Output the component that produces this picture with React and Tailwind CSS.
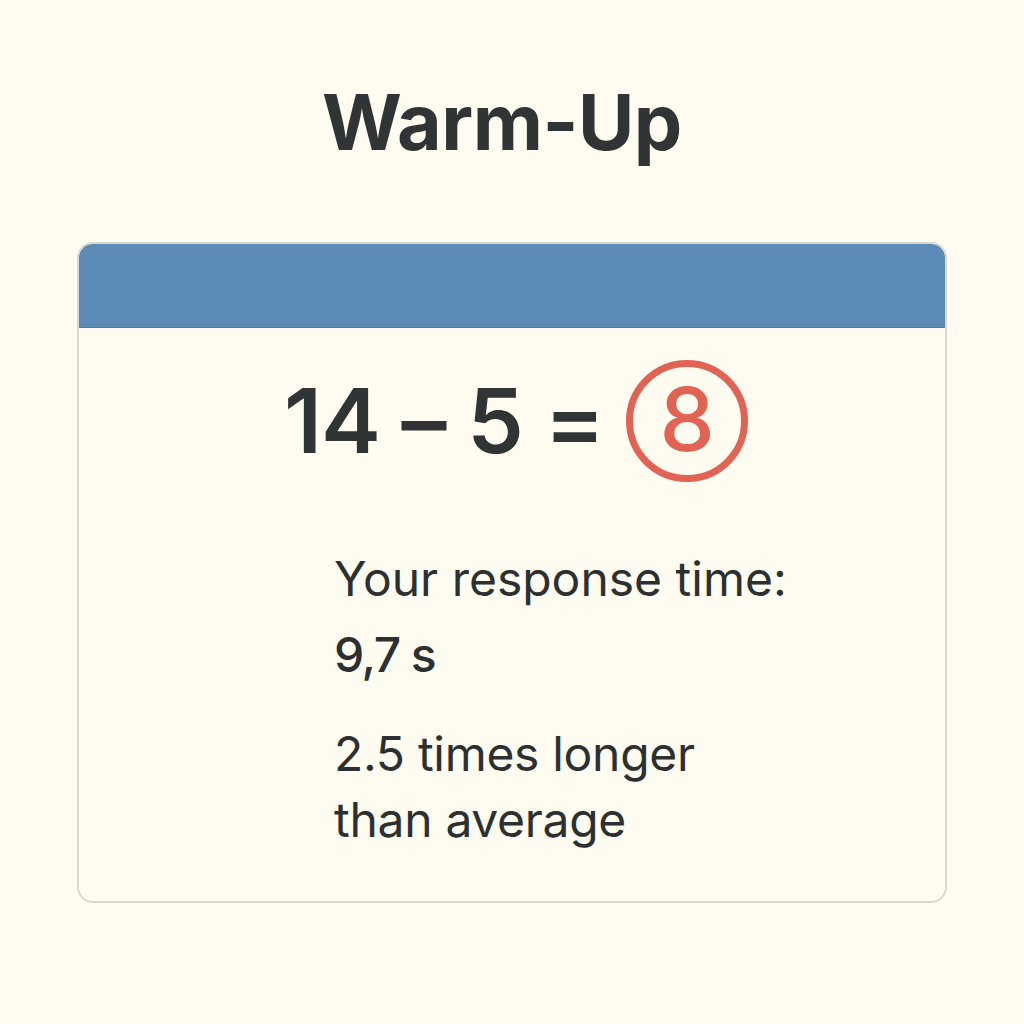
export default function App() {
  return (
    <div className="w-[1024px] h-[1024px] bg-[#fefcf0] flex flex-col items-center" style={{ fontFamily: "Inter, 'Noto Sans', sans-serif" }}>
      <h1 className="mt-[74px] mr-[20px] text-[77px] leading-[96px] font-bold text-[#303435] tracking-[-0.5px]">Warm-Up</h1>
      <div className="mt-[72px] w-[870px] h-[661px] rounded-[16px] border-2 border-[#dcd8cd] bg-[#fefcf0] overflow-hidden flex flex-col">
        <div className="h-[84px] bg-[#5d8bb8] border-b border-[#4d7db0] shrink-0"></div>
        <div className="flex items-center justify-center mt-[32px] gap-[22px] pl-[8px]">
          <span className="text-[90px] leading-[100px] font-semibold text-[#303435] tracking-[-1px]">14 – 5 =</span>
          <div className="w-[122px] h-[122px] rounded-full border-[7px] border-[#e06353] flex items-center justify-center">
            <span className="text-[88px] leading-none font-medium text-[#e06353] mt-[-4px]">8</span>
          </div>
        </div>
        <div className="ml-[255px] mt-[69px] text-[#2d3030]">
          <div className="text-[48px] leading-[56px] font-normal">Your response time:</div>
          <div className="mt-[20px] text-[48px] leading-[56px] font-medium tracking-[-1.5px]">9,7 s</div>
          <div className="mt-[38px] text-[48px] leading-[66px] font-normal tracking-[-0.3px]">2.5 times longer<br />than average</div>
        </div>
      </div>
    </div>
  );
}
